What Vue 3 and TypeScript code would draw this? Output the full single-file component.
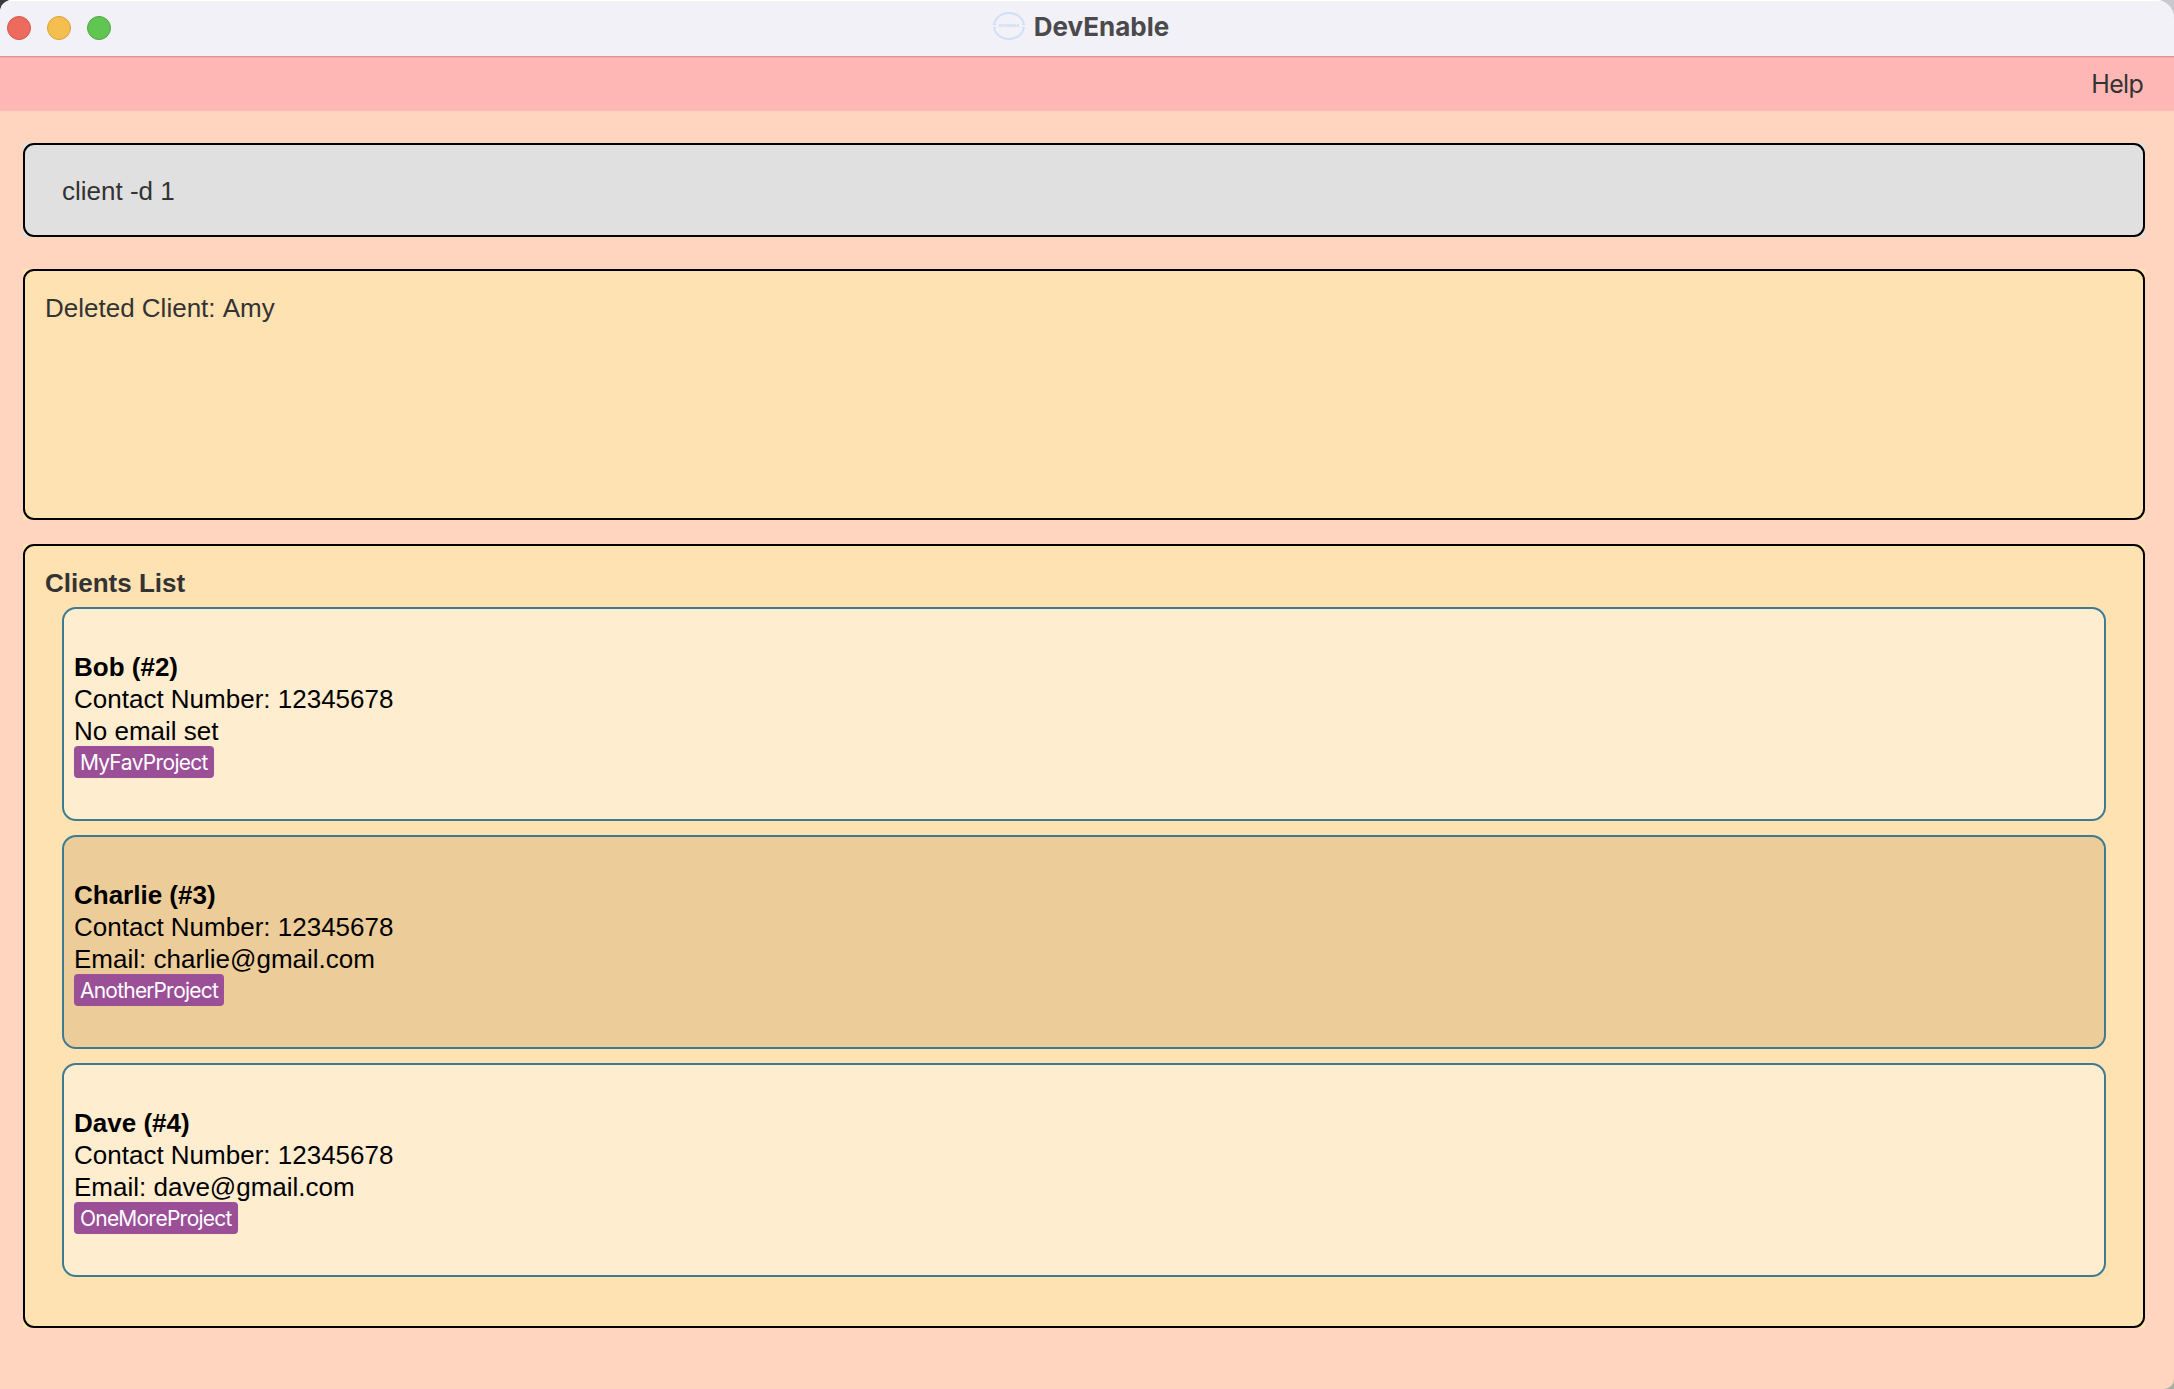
<script setup lang="ts">
interface Client {
  id: number
  name: string
  phone: string
  email?: string
  projects: string[]
}

const command = 'client -d 1'
const feedback = 'Deleted Client: Amy'

const clients: Client[] = [
  { id: 2, name: 'Bob', phone: '12345678', projects: ['MyFavProject'] },
  { id: 3, name: 'Charlie', phone: '12345678', email: 'charlie@gmail.com', projects: ['AnotherProject'] },
  { id: 4, name: 'Dave', phone: '12345678', email: 'dave@gmail.com', projects: ['OneMoreProject'] },
]
</script>

<template>
  <div class="desktop">
    <div class="window">
      <header class="titlebar">
        <div class="lights">
          <span class="light close"></span>
          <span class="light minimise"></span>
          <span class="light zoom"></span>
        </div>
        <div class="title">
          <svg class="logo" width="32" height="28" viewBox="0 0 32 28" fill="none">
            <path d="M1.2 12.5C2 5.800 8.300 1 16 1s14 4.800 14.800 11.500M1.200 15.500C2 22.200 8.300 27 16 27s14-4.800 14.800-11.500" stroke="#cfdff8" stroke-width="2" />
            <path d="M0 12.500h3M29 12.500h3M0 15.500h3M29 15.500h3" stroke="#cfdff8" stroke-width="1" />
            <text x="5.800" y="15.300" font-size="3.600" font-weight="700" textLength="20.400" fill="#c9d9f4">DEVENABLE</text>
          </svg>
          <span>DevEnable</span>
        </div>
      </header>
      <nav class="menubar"><span>Help</span></nav>
      <main class="content">
        <div class="pane command"><span>{{ command }}</span></div>
        <div class="pane result"><span>{{ feedback }}</span></div>
        <section class="pane list">
          <h1>Clients List</h1>
          <div class="cards">
            <article v-for="(client, i) in clients" :key="client.id" class="card" :class="{ odd: i % 2 === 1 }">
              <h2>{{ client.name }} (#{{ client.id }})</h2>
              <p>Contact Number: {{ client.phone }}</p>
              <p>{{ client.email ? `Email: ${client.email}` : 'No email set' }}</p>
              <div class="tags">
                <span v-for="project in client.projects" :key="project" class="tag">{{ project }}</span>
              </div>
            </article>
          </div>
        </section>
      </main>
    </div>
  </div>
</template>

<style>
body {
  margin: 0;
  overflow: hidden;
}
</style>

<style scoped>
* {
  box-sizing: border-box;
}

.desktop {
  width: 2174px;
  height: 1389px;
  background:
    linear-gradient(#a3b0a4, #a3b0a4) right bottom / 20px 20px no-repeat,
    linear-gradient(90deg, #3c3a3e 0 50%, #c9c8cc 50%);
  font-family: 'Liberation Sans', Arial, sans-serif;
  font-size: 26px;
  font-kerning: none;
  color: #333;
}

.window {
  display: flex;
  flex-direction: column;
  height: 100%;
  overflow: hidden;
  border-radius: 12px 18px 10px 0;
  background: #ffd5c0;
}

.titlebar {
  display: grid;
  grid-template-columns: 1fr auto 1fr;
  align-items: center;
  height: 56px;
  flex: none;
  background: #f2f1f7;
  box-shadow: inset 0 1px #fff;
}

.lights {
  display: flex;
  gap: 16px;
  padding-left: 7px;
}

.light {
  width: 24px;
  height: 24px;
  border-radius: 50%;
  border: 1px solid;
}

.close {
  background: #ec6a5e;
  border-color: #d6554c;
}

.minimise {
  background: #f5bf4f;
  border-color: #d9a13c;
}

.zoom {
  background: #61c554;
  border-color: #4fa73d;
}

.title {
  display: flex;
  align-items: center;
  gap: 9px;
  height: 52px;
  margin-bottom: 4px;
  padding-right: 12px;
  font-family: Inter, sans-serif;
  font-size: 26px;
  font-weight: 700;
  font-kerning: normal;
  color: #4a494c;
}

.menubar {
  display: flex;
  justify-content: flex-end;
  align-items: center;
  flex: none;
  height: 55px;
  padding: 0 31px 1px 0;
  border-top: 1px solid #dc9492;
  box-shadow: inset 0 1px #f3aaa8;
  background: #ffb7b5;
  font-family: Inter, sans-serif;
  font-size: 25px;
  letter-spacing: -0.7px;
}

.content {
  display: flex;
  flex-direction: column;
  flex: 1;
  padding: 32px 29px 61px 23px;
}

.pane {
  position: relative;
  z-index: 0;
  border: 2px solid transparent;
}

/* square backing that shows behind the rounded corners */
.pane::before {
  content: '';
  position: absolute;
  inset: -2px;
  z-index: -2;
  background: #ffe2b2;
}

.pane::after {
  content: '';
  position: absolute;
  inset: -2px;
  z-index: -1;
  border: 2px solid #000;
  border-radius: 11px;
}

.command::before {
  background: #e0e0e0;
}

.command {
  display: flex;
  align-items: center;
  height: 94px;
  padding: 2px 0 0 37px;
}

.result {
  height: 251px;
  margin: 32px 0 24px;
  padding: 21px 20px;
  line-height: 32px;
}

.list {
  flex: 1;
  padding: 21px 37px 0;
}

h1,
h2,
p {
  margin: 0;
  font-size: 26px;
  line-height: 32px;
}

h1 {
  height: 40px;
  margin-left: -17px;
}

.cards {
  display: flex;
  flex-direction: column;
  gap: 14px;
}

.card {
  height: 214px;
  padding: 42px 10px 40px;
  border: 2px solid #3e7b91;
  border-radius: 14px;
  background: #ffedd0;
  color: #000;
}

.card.odd {
  background: #eccd99;
}

.tags {
  display: flex;
  gap: 6px;
  margin-top: -1px;
}

.tag {
  height: 32px;
  padding: 1px 6px 0;
  border-radius: 4px;
  background: #9a4f96;
  color: #fff;
  font-family: Inter, sans-serif;
  font-size: 21px;
  line-height: 32px;
  letter-spacing: -0.78px;
}
</style>
